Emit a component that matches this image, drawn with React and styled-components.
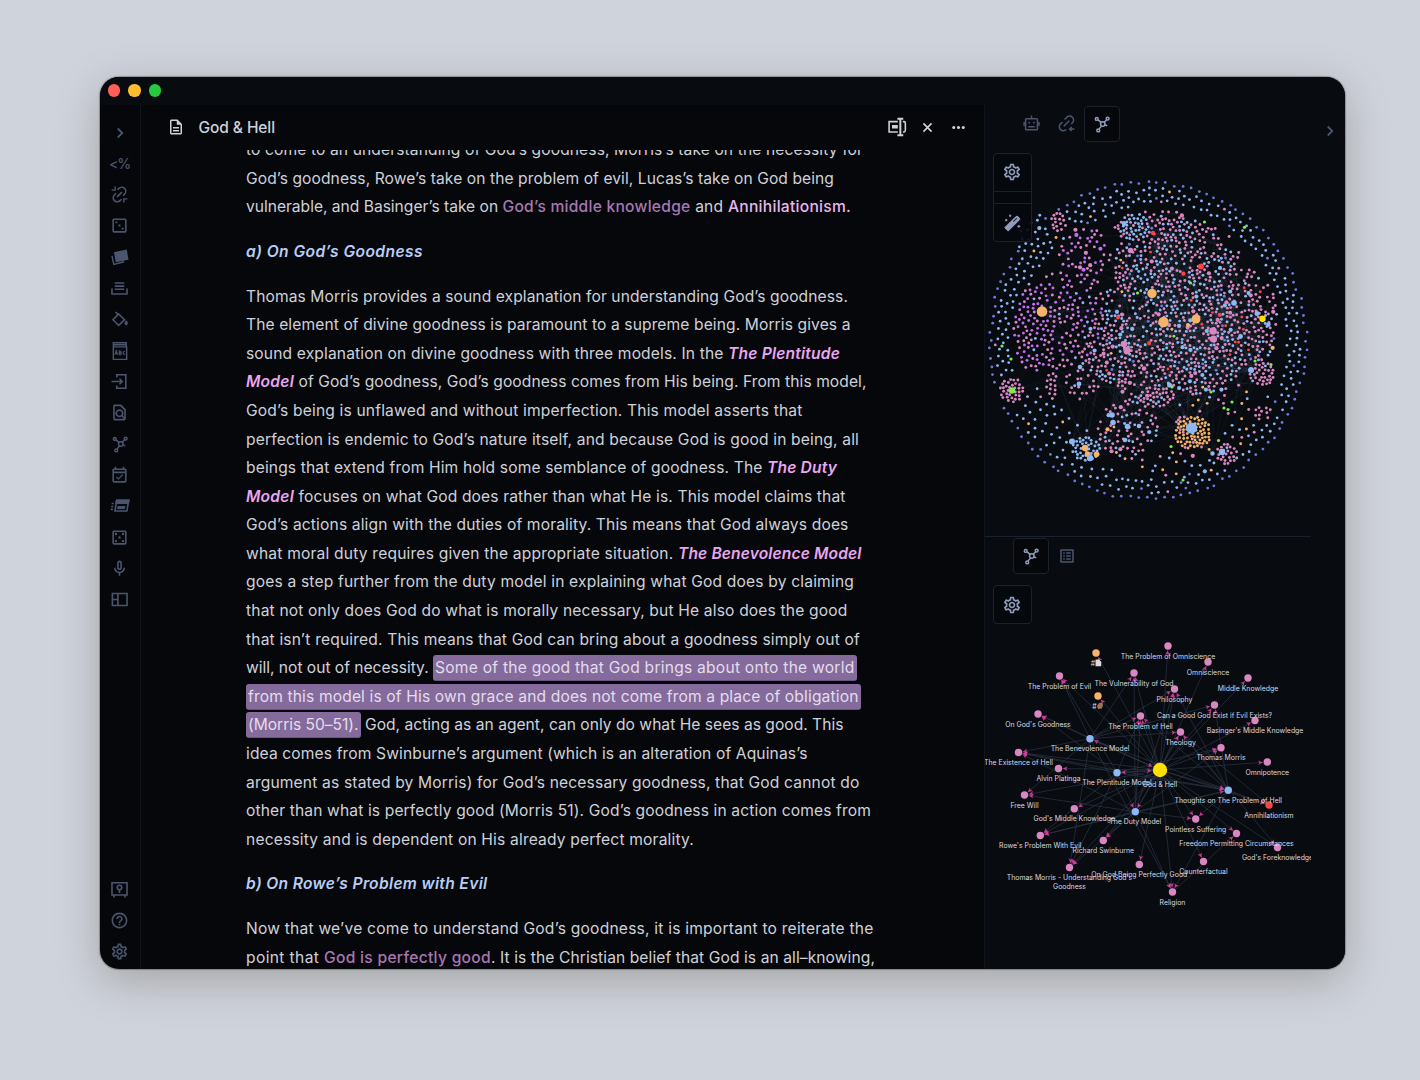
import React, { useLayoutEffect, useRef, useState } from "react";
import styled, { createGlobalStyle, css } from "styled-components";
import {
  MdChevronRight,
  MdClose,
  MdMoreHoriz,
  MdOutlineCasino,
  MdOutlineDescription,
  MdOutlineEventAvailable,
  MdOutlineFindInPage,
  MdOutlineHelpOutline,
  MdOutlineListAlt,
  MdOutlineMicNone,
  MdOutlineSettings,
} from "react-icons/md";

const color = {
  text: "#cfd1d9",
  muted: "#4b566e",
  soft: "#8f9dbb",
  line: "#11141b",
  box: "#1b212d",
  main: "#06070b",
  panel: "#080b10",
  pink: "#d987c0",
  blue: "#8db7f5",
  indigo: "#6b78dc",
  purple: "#c26df0",
  orange: "#f7b469",
  red: "#f94444",
  green: "#7bee4d",
  yellow: "#ffdf00",
};

const GlobalStyle = createGlobalStyle`
  * { box-sizing: border-box; }
  body { margin: 0; background: #cfd3dc; font-family: Inter, "Liberation Sans", sans-serif; }
`;

const Desktop = styled.div`
  width: 1420px;
  height: 1080px;
  overflow: hidden;
  padding: 77px 75px 111px 100px;
  background: #cfd3dc;
`;

const Window = styled.div`
  width: 1245px;
  height: 892px;
  display: flex;
  flex-direction: column;
  border-radius: 19px;
  overflow: hidden;
  background: ${color.main};
  box-shadow: 0 0 1px 1px rgba(60, 62, 70, 0.4), 0 12px 44px rgba(40, 28, 0, 0.25);
`;

const TitleBar = styled.div`
  flex: none;
  height: 28px;
  display: flex;
  align-items: center;
  gap: 8px;
  padding: 0 0 1px 8px;
  background: ${color.panel};
`;

const Light = styled.span`
  width: 12.3px;
  height: 12.3px;
  border-radius: 50%;
  background: ${(p) => p.$tone};
`;

const Body = styled.div`
  flex: 1;
  min-height: 0;
  display: flex;
`;

const Ribbon = styled.nav`
  flex: none;
  width: 41px;
  display: flex;
  flex-direction: column;
  justify-content: space-between;
  padding: 12px 1px 1.8px 0;
  border-right: 1px solid ${color.line};
`;

const RibbonGroup = styled.div`
  display: flex;
  flex-direction: column;
`;

const RibbonButton = styled.div`
  height: 31.15px;
  display: flex;
  align-items: center;
  justify-content: center;
  color: ${color.muted};
  font-size: 14px;
  font-weight: 500;
  letter-spacing: -1.2px;
`;

const Main = styled.main`
  flex: none;
  width: 843.5px;
  display: flex;
  flex-direction: column;
  border-right: 1px solid ${color.line};
`;

const Header = styled.header`
  flex: none;
  height: 45px;
  display: flex;
  align-items: center;
  padding: 0 10px 1px 26px;
  color: ${color.text};
`;

const HeaderTitle = styled.div`
  margin-left: 13.5px;
  flex: 1;
  font-size: 15.5px;
  font-weight: 500;
  white-space: pre;
`;

const HeaderActions = styled.div`
  display: flex;
  align-items: center;
`;

const HeaderAction = styled.span`
  width: 30.5px;
  display: flex;
  justify-content: center;
`;

const Article = styled.article`
  flex: 1;
  min-height: 0;
  overflow: hidden;
  padding-left: 105px;
  color: ${color.text};
  font-size: 15.6px;
  line-height: 28.58px;
`;

const Block = styled.div`
  margin-bottom: 16.1px;
  ${(p) => p.$first && css`margin-top: -13.8px;`}
`;

const Line = styled.div`
  height: 28.58px;
  display: flex;
  white-space: pre;
`;

const kinds = {
  plain: css``,
  link: css`color: #a877b3; font-weight: 500;`,
  strong: css`color: #e9b6ee; font-weight: 500;`,
  model: css`color: #eaa6ee; font-weight: 600; font-style: italic;`,
  heading: css`color: #b8cdf6; font-weight: 600; font-style: italic;`,
  mark: css`
    height: 26px;
    line-height: 25.6px;
    margin-top: 1px;
    padding: 0 2.5px 0 2px;
    border-radius: 3px;
    background: #846b9c;
    border-bottom: 1px solid #6a5580;
    color: #e3dcec;
    margin-right: ${(p) => (p.$gap ? "4px" : 0)};
  `,
};

const Segment = styled.span`
  flex: none;
  ${(p) => kinds[p.$kind]}
`;

function Fit({ text, width, kind = "plain", gap }) {
  const ref = useRef(null);
  const [spacing, setSpacing] = useState(0);
  useLayoutEffect(() => {
    const natural = ref.current.getBoundingClientRect().width;
    setSpacing((width - natural) / text.length);
  }, [text, width]);
  return (
    <Segment $kind={kind} $gap={gap}>
      <span ref={ref} style={{ letterSpacing: spacing }}>{text}</span>
    </Segment>
  );
}

/* Each line is a list of [text, width, kind]. */
const blocks = [
  [
    [["to come to an understanding of God’s goodness, Morris’s take on the necessity for", 617]],
    [["God’s goodness, Rowe’s take on the problem of evil, Lucas’s take on God being", 588]],
    [
      ["vulnerable, and Basinger’s take on ", 256.5],
      ["God’s middle knowledge", 188, "link"],
      [" and ", 37.5],
      ["Annihilationism", 118, "strong"],
      [".", 4, "strong"],
    ],
  ],
  [[["a) On God’s Goodness", 177, "heading"]]],
  [
    [["Thomas Morris provides a sound explanation for understanding God’s goodness.", 602]],
    [["The element of divine goodness is paramount to a supreme being. Morris gives a", 604.5]],
    [["sound explanation on divine goodness with three models. In the ", 482], ["The Plentitude", 112, "model"]],
    [["Model", 48, "model"], [" of God’s goodness, God’s goodness comes from His being. From this model,", 572.5]],
    [["God’s being is unflawed and without imperfection. This model asserts that", 556.5]],
    [["perfection is endemic to God’s nature itself, and because God is good in being, all", 613]],
    [["beings that extend from Him hold some semblance of goodness. The ", 521], ["The Duty", 70, "model"]],
    [["Model", 48, "model"], [" focuses on what God does rather than what He is. This model claims that", 551.5]],
    [["God’s actions align with the duties of morality. This means that God always does", 602.5]],
    [["what moral duty requires given the appropriate situation. ", 432], ["The Benevolence Model", 183.5, "model"]],
    [["goes a step further from the duty model in explaining what God does by claiming", 608]],
    [["that not only does God do what is morally necessary, but He also does the good", 601.5]],
    [["that isn’t required. This means that God can bring about a goodness simply out of", 614]],
    [["will, not out of necessity. ", 187], ["Some of the good that God brings about onto the world", 419.5, "mark"]],
    [["from this model is of His own grace and does not come from a place of obligation", 610.5, "mark"]],
    [["(Morris 50–51).", 110.5, "mark", true], ["God, acting as an agent, can only do what He sees as good. This", 478.5]],
    [["idea comes from Swinburne’s argument (which is an alteration of Aquinas’s", 561.5]],
    [["argument as stated by Morris) for God’s necessary goodness, that God cannot do", 613.5]],
    [["other than what is perfectly good (Morris 51). God’s goodness in action comes from", 625]],
    [["necessity and is dependent on His already perfect morality.", 448]],
  ],
  [[["b) On Rowe’s Problem with Evil", 241.5, "heading"]]],
  [
    [["Now that we’ve come to understand God’s goodness, it is important to reiterate the", 627.5]],
    [
      ["point that ", 78],
      ["God is perfectly good", 167, "link"],
      [". It is the Christian belief that God is an all–knowing,", 384],
    ],
  ],
];

const Right = styled.aside`
  flex: 1;
  display: flex;
  background: ${color.panel};
`;

const Panels = styled.div`
  flex: none;
  width: 326.5px;
  display: flex;
  flex-direction: column;
`;

const Panel = styled.section`
  position: relative;
  display: flex;
  flex-direction: column;
  height: ${(p) => p.$height};
  ${(p) => p.$divided && css`border-top: 1.5px solid ${color.box};`}
`;

const Tabs = styled.div`
  flex: none;
  display: flex;
  padding: 1px 0 ${(p) => p.$bottom || 0} 28.8px;
`;

const Tab = styled.div`
  width: 35.6px;
  height: 35.6px;
  display: flex;
  align-items: center;
  justify-content: center;
  border: 1px solid transparent;
  border-radius: 4px;
  color: ${color.muted};
  ${(p) => p.$active && css`
    border-color: ${color.box};
    background: #05070a;
    color: ${color.soft};
  `}
`;

const Controls = styled.div`
  position: absolute;
  top: ${(p) => p.$top};
  left: 8.5px;
  width: 38.5px;
  border: 1px solid ${color.box};
  border-radius: 4px;
  background: rgba(6, 8, 12, 0.9);
  color: ${color.soft};
`;

const Control = styled.div`
  height: ${(p) => p.$height || "37px"};
  display: flex;
  align-items: center;
  justify-content: center;
  & + & { border-top: 1px solid ${color.box}; }
`;

const Canvas = styled.svg`
  display: block;
  flex: none;
  width: 326px;
  margin-left: 0.5px;
`;

const Collapse = styled.div`
  padding: 16.5px 0 0 10px;
  color: ${color.muted};
`;

/* ---------- icons ---------- */

const Glyph = ({ size = 19, w = 2, children }) => (
  <svg width={size} height={size} viewBox="0 0 24 24" fill="none" stroke="currentColor" strokeWidth={w}>
    {children}
  </svg>
);

const ChevronIcon = () => (
  <Glyph size={18} w={2.4}>
    <path d="M9 6l6 6-6 6" />
  </Glyph>
);
const CloseIcon = () => (
  <Glyph size={15} w={2.600}>
    <path d="M5.500 5.500l13 13M18.500 5.500l-13 13" />
  </Glyph>
);
const UnlinkIcon = () => (
  <Glyph>
    <path d="M9.500 6l1.800-1.700a5 5 0 0 1 7.200 7L16.500 13.500M14.500 18l-1.800 1.700a5 5 0 0 1-7.200-7L7.500 10.500M9 15l6-6" />
    <path d="M2 6.500h4.500V2M17.500 22v-4.500H22" strokeWidth="1.800" />
  </Glyph>
);
const DiceThreeIcon = () => (
  <Glyph>
    <rect x="4" y="4" width="16" height="16" rx="1" />
    <path d="M6.8 8h2.4M10.8 12h2.4M14.8 16h2.4" strokeWidth="2.4" />
  </Glyph>
);
const CardsIcon = () => (
  <Glyph w={1.8}>
    <path d="M6 5.8L20.5 3l1.8 11L8 17z" fill="currentColor" />
    <path d="M2.500 10l2.300 10.700 13-3.400" />
  </Glyph>
);
const TrayIcon = () => (
  <Glyph>
    <path d="M6 5h12M6 9h12M6 13h12M2.500 12v7h19v-7" />
  </Glyph>
);
const BucketIcon = () => (
  <Glyph>
    <path d="M7 2.500l3.500 3.600M11 5l7.300 7.300L11 19.500l-7.200-7.200z" />
    <path d="M20.500 13.500c2.500 3 2 5 0 5s-2.500-2 0-5z" fill="currentColor" strokeWidth="1" />
  </Glyph>
);
const AbcIcon = () => (
  <Glyph size={20} w={1.700}>
    <path d="M4 7V2h15.500v5M4 7h16v15H4zM4 4.500h15" />
    <path d="M6 16.500l1.500-5 1.500 5M6.500 15h2M11 11.800v4.700h1.500a1 1 0 0 0 0-2.300H11h1.400a1 1 0 0 0 0-2.300zM18 12.800c-2.800-1.700-2.800 4.400 0 3" strokeWidth="1.300" />
  </Glyph>
);
const EnterIcon = () => (
  <Glyph>
    <path d="M8.500 7V3.500H20v17H8.500V17M2 12h13M12 8.500l3.500 3.500-3.500 3.500" />
  </Glyph>
);
const GraphIcon = () => (
  <Glyph size={18} w={2}>
    <circle cx="13" cy="12" r="3" />
    <circle cx="5" cy="5.200" r="1.900" />
    <circle cx="19.500" cy="4.800" r="1.900" />
    <circle cx="7" cy="20.500" r="1.900" />
    <path d="M6.800 6.500l4.200 3.700M18.200 6.300l-3.200 3.500M8.200 18.500l3.300-4M15.500 13l3.500 1.300" />
  </Glyph>
);
const StackIcon = () => (
  <Glyph size={20} w={1.900}>
    <path d="M8 5h14.500l-2.300 13H6z" />
    <path d="M8 5h14.500l-.6 3.500H7.300z" fill="currentColor" />
    <path d="M9.500 12.500h8.500l-.6 2.700H9z" fill="currentColor" strokeWidth="1" />
    <path d="M2 9h2.500M1.500 12.500H4M1 16h2.500" />
  </Glyph>
);
const SidebarIcon = () => (
  <Glyph>
    <path d="M3 4.500h18.500v15H3zM10 4.500v15M3 12h7" />
  </Glyph>
);
const VaultIcon = () => (
  <Glyph>
    <path d="M2.500 3.500h19v15.500h-19zM5 19v3M19 19v3" />
    <circle cx="12" cy="9.500" r="2.800" />
    <path d="M12 12.500v4" />
  </Glyph>
);
const RobotIcon = () => (
  <Glyph w={1.900}>
    <rect x="4.500" y="6" width="15" height="14" rx="1" />
    <path d="M12 6V2M2.700 10v5M21.300 10v5M8 16h8" />
    <path d="M8 11h2M14 11h2" strokeWidth="2.200" />
  </Glyph>
);
const LinkIcon = () => (
  <Glyph w={1.900}>
    <path d="M9.500 7l3-3a4.900 4.900 0 0 1 7 7L18 12.800M11.500 19.500a4.900 4.900 0 0 1-7.300-6.700L7 10M8.500 15.500l7-7" />
    <path d="M22 19h-6M18.500 16.500l-2.500 2.500 2.500 2.500" />
  </Glyph>
);
const WandIcon = () => (
  <Glyph size={19} w={1.500}>
    <path d="M3 18.500L16.500 5a1.500 1.500 0 0 1 2.200 0l1.300 1.300a1.500 1.500 0 0 1 0 2.200L6.500 22z" fill="currentColor" strokeWidth="2" />
    <path d="M13 11L17.500 6.500" stroke="#1c2230" strokeWidth="1.300" />
    <path d="M9 2v3M7.500 3.500h3M4 7.500v3M2.500 9h3M20 15v3.600M18.200 16.800h3.600" />
  </Glyph>
);
const RenameIcon = () => (
  <Glyph size={20} w={1.900}>
    <path d="M13 5.500H2.500v12.500H13M19 5.500h1.500q1.500 0 1.500 2V16q0 2-1.500 2H19" />
    <path d="M6 11.700h7" strokeWidth="4" />
    <path d="M12.500 2h7M12.500 22h7M16 2v20" strokeWidth="2.400" />
  </Glyph>
);

/* ---------- vault graph ---------- */

function random(seed) {
  let a = seed;
  return () => {
    a = (a + 0x6d2b79f5) | 0;
    let t = Math.imul(a ^ (a >>> 15), 1 | a);
    t = (t + Math.imul(t ^ (t >>> 7), 61 | t)) ^ t;
    return ((t ^ (t >>> 14)) >>> 0) / 4294967296;
  };
}

const pick = (r, mix) => {
  let v = r();
  for (const [c, share] of mix) {
    v -= share;
    if (v <= 0) return color[c];
  }
  return color[mix[0][0]];
};

const both = [["pink", 0.57], ["blue", 0.37], ["orange", 0.015], ["red", 0.015], ["indigo", 0.027], ["green", 0.003]];
const rosy = [["pink", 0.86], ["blue", 0.14]];
const violet = [["purple", 0.72], ["pink", 0.24], ["blue", 0.04]];
const mixed = [["pink", 0.55], ["purple", 0.4], ["blue", 0.05]];
const sky = [["blue", 0.96], ["pink", 0.04]];
const amber = [["orange", 0.94], ["pink", 0.06]];

/* cx, cy, rx, ry, count, minimum distance, colours */
const clusters = [
  [1012, 389, 12, 12, 44, 3, [["pink", 1]]],
  [1193, 432, 18.5, 16, 120, 2.900, amber],
  [1183, 424, 7, 10, 16, 2.6, [["pink", 1]]],
  [1086, 448, 14, 12, 40, 3, sky],
  [1227, 453, 11, 10, 26, 3.2, rosy],
  [1262, 373, 12, 12, 36, 3.1, rosy],
  [1263, 412, 8, 8, 10, 3.5, rosy],
  [1059, 221, 8, 9, 22, 3.2, rosy],
  [1052, 385, 6, 13, 14, 3.5, [["pink", 1]]],
  [1034, 328, 21, 42, 96, 4, violet],
  [1056, 318, 24, 50, 64, 3.800, mixed],
  [1085, 252, 26, 26, 54, 3.800, mixed],
  [1084, 312, 20, 44, 42, 4, mixed],
  [1133, 226, 16, 14, 46, 3.100, [["blue", 0.75], ["pink", 0.25]]],
  [1180, 236, 18, 20, 46, 3.100, both],
  [1158, 226, 46, 17, 34, 3.200, rosy],
  [1160, 250, 30, 30, 46, 3.300, both],
  [1208, 254, 32, 28, 54, 3.300, rosy],
  [1128, 268, 14, 30, 44, 3.200, both],
  [1208, 285, 32, 35, 58, 3.300, both],
  [1145, 310, 42, 54, 160, 3.100, both],
  [1188, 320, 44, 52, 155, 3.100, both],
  [1242, 312, 36, 44, 110, 3.100, [["pink", 0.8], ["blue", 0.17], ["red", 0.03]]],
  [1240, 338, 36, 30, 50, 3.200, both],
  [1112, 345, 28, 38, 86, 3.100, both],
  [1085, 372, 22, 28, 34, 3.300, rosy],
  [1150, 375, 38, 24, 62, 3.100, rosy],
  [1200, 368, 40, 26, 70, 3.200, both],
  [1156, 395, 18, 11, 26, 3.100, rosy],
  [1128, 428, 30, 30, 80, 3.300, [["pink", 0.72], ["blue", 0.24], ["orange", 0.04]]],
  [1218, 417, 42, 38, 26, 6, [["pink", 0.4], ["orange", 0.34], ["blue", 0.26]]],
  [1180, 463, 40, 12, 20, 5, [["blue", 0.4], ["orange", 0.3], ["pink", 0.3]]],
  [1038, 232, 26, 22, 20, 5.5, [["blue", 0.74], ["orange", 0.18], ["pink", 0.08]]],
];

const hubs = [
  [1042, 310.5, 5.3, "orange"], [1152, 292.500, 4.700, "orange"], [1163.500, 321, 5.200, "orange"],
  [1196, 318, 4.500, "orange"], [1188, 324, 2, "orange"], [1262.500, 317.700, 3.200, "yellow"],
  [1012, 389.500, 3.200, "green"], [1191.500, 427, 5.500, "blue"], [1072, 440.500, 3, "blue"],
  [1085, 447, 3.200, "orange"], [1087.500, 453, 2.700, "orange"], [1096.500, 453.300, 2.800, "orange"],
  [1090, 457, 3.200, "blue"], [1222, 451, 3.200, "blue"], [1212.500, 452.500, 2.200, "blue"],
  [1251, 369, 3, "blue"], [1124, 343, 3.300, "pink"], [1127, 349.500, 3.700, "pink"],
  [1213, 330, 3.800, "pink"], [1213.500, 338, 3.600, "pink"], [1201, 265.500, 2.900, "red"],
  [1153, 232, 2.200, "red"], [1112, 414, 2.800, "blue"], [1113, 421.500, 2.800, "blue"],
  [1127.500, 425.500, 2.800, "blue"], [1139, 425, 2.300, "blue"], [1125, 439, 2.300, "blue"],
  [1130.500, 249.500, 2.800, "pink"], [1234, 302, 2.800, "blue"], [1240.500, 335.500, 2.400, "blue"],
  [1079, 383, 2.400, "blue"], [1080, 366, 2.300, "blue"], [1169.500, 384, 2.500, "blue"],
  [1144, 367.500, 2.300, "pink"], [1118, 316.500, 2, "red"], [1268.500, 323.500, 2.200, "blue"],
  [1257, 312.500, 2.500, "blue"], [1124, 222.500, 2.400, "blue"], [1204.500, 221, 1.600, "green"],
  [1244.500, 226.300, 1.600, "green"], [1002, 345, 1.600, "green"], [1011, 358, 1.600, "green"],
  [1224, 407, 1.600, "green"], [1228, 408.500, 1.600, "green"], [1232, 401, 1.600, "green"],
  [1211, 391, 1.600, "green"], [1172, 386, 1.600, "green"], [1190.500, 282, 1.600, "green"],
  [1137.500, 292, 1.600, "green"], [1183, 479, 1.600, "green"], [1171, 445.500, 1.600, "green"],
  [1218.500, 439.500, 1.600, "green"], [1271, 363.500, 1.600, "green"], [1255, 360, 1.600, "green"],
];

function buildVault() {
  const r = random(71);
  const dots = [];
  const put = (x, y, min, fill, rad = 1.35) => {
    for (const d of dots) {
      if ((d.x - x) ** 2 + (d.y - y) ** 2 < min * min) return false;
    }
    dots.push({ x, y, fill, rad });
    return true;
  };
  clusters.forEach(([cx, cy, rx, ry, n, min, mix]) => {
    for (let i = 0, tries = 0; i < n && tries < n * 14; tries++) {
      const a = r() * Math.PI * 2;
      const q = Math.sqrt(r());
      const rad = rx > 24 && r() < 0.06 ? 2.1 : 1.45;
      if (put(cx + Math.cos(a) * q * rx, cy + Math.sin(a) * q * ry, min, pick(r, mix), rad)) i++;
    }
  });
  for (let i = 0; i < 116; i++) {
    const a = (i / 116) * Math.PI * 2 + (r() - 0.5) * 0.016;
    const q = 158 + (r() - 0.5) * 3.600;
    put(1148 + Math.cos(a) * q, 339.500 + Math.sin(a) * q, 4, color.indigo, 1.4);
  }
  for (let i = 0; i < 14000; i++) {
    const a = r() * Math.PI * 2;
    const deg = (a * 180) / Math.PI;
    let inner = 139;
    let gap = 5.800;
    if (deg > 105 && deg < 158) { inner = deg > 122 ? 108 : 134; gap = 7; }
    if (deg > 25 && deg < 62) { inner = 132; gap = 6.600; }
    if (deg > 205 && deg < 262) inner = 131;
    const q = inner + r() * (153 - inner);
    const fill = pick(r, [["blue", 0.93], ["pink", 0.03], ["indigo", 0.03], ["orange", 0.01]]);
    put(1148 + Math.cos(a) * q, 339.500 + Math.sin(a) * q, gap, fill, 1.4);
  }
  const core = dots.filter((d) => (d.x - 1155) ** 2 + (d.y - 325) ** 2 < 122 * 122);
  const edges = [];
  for (let i = 0; i < 800; i++) {
    const h = hubs[Math.floor(r() ** 1.500 * 32)];
    const d = core[Math.floor(r() * core.length)];
    const len = Math.hypot(h[0] - d.x, h[1] - d.y);
    if (len < 110) edges.push([h[0], h[1], d.x, d.y]);
  }
  for (let i = 0; i < 2600; i++) {
    const p = core[Math.floor(r() * core.length)];
    const d = core[Math.floor(r() * core.length)];
    if (Math.hypot(p.x - d.x, p.y - d.y) < 80 && p.x > 1105 && d.x > 1105 && p.y < 400) edges.push([p.x, p.y, d.x, d.y]);
  }
  return { dots, edges };
}

const vault = buildVault();

const VaultGraph = () => (
  <Canvas height="395" viewBox="985 141 326 395">
    <g stroke="#54617a" strokeOpacity="0.16" strokeWidth="0.7">
      {vault.edges.map(([a, b, c, d], i) => <line key={i} x1={a} y1={b} x2={c} y2={d} />)}
    </g>
    {vault.dots.map((d, i) => <circle key={i} cx={d.x} cy={d.y} r={d.rad} fill={d.fill} />)}
    {hubs.map(([x, y, rad, c], i) => <circle key={i} cx={x} cy={y} r={rad} fill={color[c]} />)}
  </Canvas>
);

/* ---------- local graph ---------- */

const nodes = {
  doc: [1096, 653, "", "orange"],
  omniProblem: [1168, 646, "The Problem of Omniscience"],
  omni: [1208, 662, "Omniscience"],
  middle: [1248, 678, "Middle Knowledge"],
  evil: [1059.500, 676, "The Problem of Evil"],
  vulnerable: [1134, 673, "The Vulnerability of God"],
  philosophy: [1174.500, 689, "Philosophy"],
  fist: [1098, 696, "", "orange"],
  canGod: [1214.500, 705, "Can a Good God Exist if Evil Exists?"],
  goodness: [1038, 714, "On God's Goodness"],
  hellProblem: [1140.500, 716, "The Problem of Hell"],
  basinger: [1255, 720.500, "Basinger's Middle Knowledge"],
  theology: [1180.500, 732, "Theology"],
  benevolence: [1090, 738.700, "The Benevolence Model", "blue"],
  morris: [1221, 747.700, "Thomas Morris"],
  existence: [1018.500, 752.500, "The Existence of Hell"],
  omnipotence: [1267.300, 762, "Omnipotence"],
  alvin: [1058.500, 768.500, "Alvin Platinga"],
  plentitude: [1117, 772.700, "The Plentitude Model", "blue"],
  main: [1160, 770, "God & Hell", "yellow"],
  freeWill: [1024.500, 795, "Free Will"],
  thoughts: [1228.300, 790.300, "Thoughts on The Problem of Hell", "blue"],
  godsMiddle: [1074.300, 808.700, "God's Middle Knowledge"],
  annihilation: [1269, 805, "Annihilationism", "red"],
  duty: [1135.300, 811.700, "The Duty Model", "blue"],
  pointless: [1195.700, 819, "Pointless Suffering"],
  freedom: [1236.500, 833.500, "Freedom Permitting Circumstances"],
  rowe: [1040.300, 835.500, "Rowe's Problem With Evil"],
  swinburne: [1103.300, 840.500, "Richard Swinburne"],
  foreknowledge: [1277.500, 847.500, "God's Foreknowledge"],
  counter: [1203.500, 861.500, "Counterfactual"],
  morrisUnderstanding: [1069.500, 867.500, "Thomas Morris - Understanding God's|Goodness"],
  perfectly: [1139.300, 864.500, "On God Being Perfectly Good"],
  religion: [1172.500, 892, "Religion"],
};

const links = {
  main: Object.keys(nodes).filter((k) => k !== "main"),
  benevolence: ["evil", "goodness", "existence", "canGod", "theology", "main", "hellProblem", "philosophy", "morrisUnderstanding", "freeWill", "vulnerable", "religion", "thoughts"],
  plentitude: ["evil", "existence", "goodness", "hellProblem", "morris", "morrisUnderstanding", "rowe", "duty", "main", "thoughts"],
  duty: ["hellProblem", "theology", "philosophy", "swinburne", "rowe", "morrisUnderstanding", "religion", "pointless", "thoughts", "vulnerable", "morris", "freeWill", "existence"],
  thoughts: ["hellProblem", "theology", "canGod", "existence", "philosophy", "pointless", "annihilation", "religion", "rowe"],
  theology: ["annihilation", "foreknowledge"],
  religion: ["freedom"],
};

const localEdges = Object.entries(links).flatMap(([from, list]) => list.map((to) => [nodes[from], nodes[to]]));

function Arrow({ from, to }) {
  const angle = (Math.atan2(to[1] - from[1], to[0] - from[0]) * 180) / Math.PI;
  const back = to[3] === "yellow" ? -8.500 : -4.500;
  return (
    <path d={`M${back} 0l-4.500 -2.300l1.100 2.300l-1.100 2.300z`} fill="#dc3fa0" fillOpacity="0.85" transform={`translate(${to[0]} ${to[1]}) rotate(${angle})`} />
  );
}

const Label = styled.text`
  font-family: Inter, sans-serif;
  font-size: 6.9px;
  text-anchor: middle;
  fill: #d6dae2;
`;

const LocalGraph = () => (
  <Canvas height="310" viewBox="985 624 326 310">
    <g stroke="#2d3547" strokeOpacity="0.75" strokeWidth="0.9">
      {localEdges.map(([a, b], i) => <line key={i} x1={a[0]} y1={a[1]} x2={b[0]} y2={b[1]} />)}
    </g>
    {localEdges.map(([a, b], i) => <Arrow key={i} from={a} to={b} />)}
    {Object.entries(nodes).map(([k, [x, y, , c]]) => (
      <circle key={k} cx={x} cy={y} r={c === "yellow" ? 7.200 : 3.700} fill={color[c || "pink"]} />
    ))}
    {Object.entries(nodes).map(([k, [x, y, text, c]]) =>
      text.split("|").map((part, i) => (
        <Label key={k + i} x={x} y={y + (c === "yellow" ? 16.700 : 12.700) + i * 8.500}>{part}</Label>
      ))
    )}
    <Label x="1093" y="665.500">#</Label>
    <path d="M1095.500 659.500h3.500l2.200 2.200v4.500h-5.700z" fill="#d9dce2" />
    <Label x="1094.500" y="708.500">#</Label>
    <path d="M1097 706l2-3 3-.5 1 2-1 4-4 .5z" fill="#9c7550" />
  </Canvas>
);

const ribbonTop = [
  <ChevronIcon />, "<%", <UnlinkIcon />, <DiceThreeIcon />, <CardsIcon />, <TrayIcon />,
  <BucketIcon />, <AbcIcon />, <EnterIcon />, <MdOutlineFindInPage size={19} />, <GraphIcon />,
  <MdOutlineEventAvailable size={19} />, <StackIcon />, <MdOutlineCasino size={19} />,
  <MdOutlineMicNone size={19} />, <SidebarIcon />,
];
const ribbonBottom = [<VaultIcon />, <MdOutlineHelpOutline size={19} />, <MdOutlineSettings size={19} />];

export default function App() {
  return (
    <>
      <GlobalStyle />
      <Desktop>
        <Window>
          <TitleBar>
            <Light $tone="#ff5f57" />
            <Light $tone="#febc2e" />
            <Light $tone="#28c840" />
          </TitleBar>
          <Body>
            <Ribbon>
              <RibbonGroup>{ribbonTop.map((icon, i) => <RibbonButton key={i}>{icon}</RibbonButton>)}</RibbonGroup>
              <RibbonGroup>{ribbonBottom.map((icon, i) => <RibbonButton key={i}>{icon}</RibbonButton>)}</RibbonGroup>
            </Ribbon>
            <Main>
              <Header>
                <MdOutlineDescription size={18} />
                <HeaderTitle><Fit text="God & Hell" width={76.500} /></HeaderTitle>
                <HeaderActions>
                  <HeaderAction><RenameIcon /></HeaderAction>
                  <HeaderAction><CloseIcon /></HeaderAction>
                  <HeaderAction><MdMoreHoriz size={19} /></HeaderAction>
                </HeaderActions>
              </Header>
              <Article>
                {blocks.map((lines, b) => (
                  <Block key={b} $first={b === 0}>
                    {lines.map((line, l) => (
                      <Line key={l}>
                        {line.map(([text, width, kind, gap], s) => (
                          <Fit key={s} text={text} width={width} kind={kind} gap={gap} />
                        ))}
                      </Line>
                    ))}
                  </Block>
                ))}
              </Article>
            </Main>
            <Right>
              <Panels>
                <Panel $height="431px">
                  <Tabs>
                    <Tab><RobotIcon /></Tab>
                    <Tab><LinkIcon /></Tab>
                    <Tab $active><GraphIcon /></Tab>
                  </Tabs>
                  <VaultGraph />
                  <Controls $top="47.500px">
                    <Control><MdOutlineSettings size={20} /></Control>
                    <Control $height="12.500px" />
                    <Control $height="38px"><WandIcon /></Control>
                  </Controls>
                </Panel>
                <Panel $height="433px" $divided>
                  <Tabs $bottom="50px">
                    <Tab $active><GraphIcon /></Tab>
                    <Tab><MdOutlineListAlt size={18} /></Tab>
                  </Tabs>
                  <LocalGraph />
                  <Controls $top="48px">
                    <Control><MdOutlineSettings size={20} /></Control>
                  </Controls>
                </Panel>
              </Panels>
              <Collapse><ChevronIcon /></Collapse>
            </Right>
          </Body>
        </Window>
      </Desktop>
    </>
  );
}
